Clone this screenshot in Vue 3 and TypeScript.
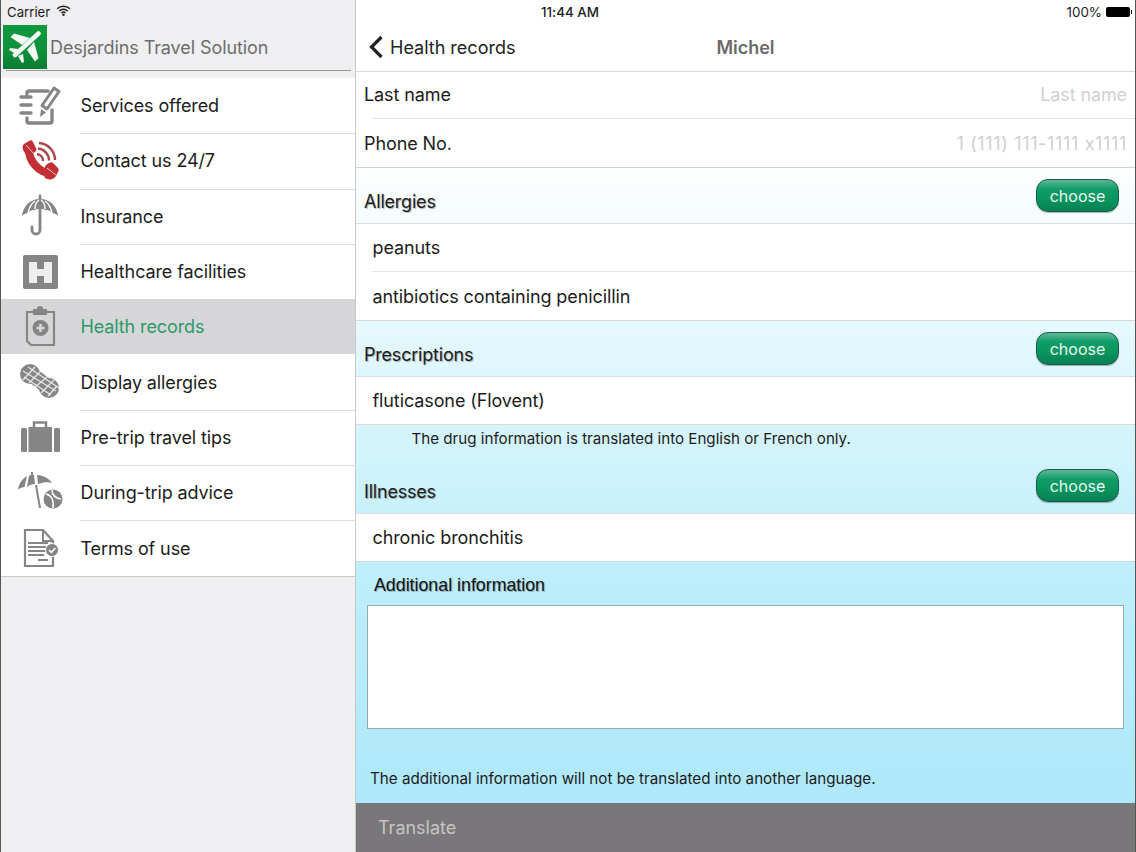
<script setup lang="ts">
interface MenuItem {
  label: string
  icon: string
  active?: boolean
}

const menu: MenuItem[] = [
  { label: 'Services offered', icon: 'services' },
  { label: 'Contact us 24/7', icon: 'phone' },
  { label: 'Insurance', icon: 'umbrella' },
  { label: 'Healthcare facilities', icon: 'hospital' },
  { label: 'Health records', icon: 'records', active: true },
  { label: 'Display allergies', icon: 'peanut' },
  { label: 'Pre-trip travel tips', icon: 'case' },
  { label: 'During-trip advice', icon: 'beach' },
  { label: 'Terms of use', icon: 'terms' }
]
</script>

<template>
  <div class="screen">
    <aside class="side">
      <div class="status-left">
        <span>Carrier</span>
        <svg class="wifi" width="15" height="11" viewBox="0 0 16 12">
          <path d="M1 4.2a10 10 0 0 1 14 0M3.4 6.6a6.6 6.6 0 0 1 9.2 0M5.7 8.8a3.4 3.4 0 0 1 4.6 0" fill="none" stroke="#222" stroke-width="1.6" />
          <circle cx="8" cy="10.6" r="1.3" fill="#222" />
        </svg>
      </div>
      <div class="brand">
        <div class="logo">
          <svg width="32" height="32" viewBox="0 0 32 32">
            <path d="M29.5 2.5 6 24" stroke="#f4f7f4" stroke-width="4.6" stroke-linecap="round" />
            <path d="M21 7 5 2.5 1.5 6 13 14zM25 11l4.5 16-3.5 3.5L18 19zM9 18 1 17l-1 2 7 4zM14 23l1 8-2 1-4-7z" fill="#f4f7f4" />
          </svg>
        </div>
        <span class="brand-name">Desjardins Travel Solution</span>
      </div>
      <ul class="menu">
        <li v-for="item in menu" :key="item.label" class="menu-item" :class="{ active: item.active }">
          <div class="menu-icon">
            <svg width="48" height="48" viewBox="0 0 48 48">
              <g v-if="item.icon === 'services'" fill="none" stroke="#858585" stroke-width="3.4" stroke-linecap="round" stroke-linejoin="round">
                <path d="M11 12v-1a2 2 0 0 1 2-2h19M5 15h10M5 23h10M5 31h10M11 36v3a2 2 0 0 0 2 2h21a2 2 0 0 0 2-2V28" />
                <path d="M38 6l5 3.5L31 27l-5-3.5z" stroke-width="3" />
                <path d="M25 27l5 3.5-6 4.5z" fill="#858585" stroke="none" />
              </g>
              <g v-else-if="item.icon === 'phone'">
                <path d="M13 11C12 24 24 37 36 36" fill="none" stroke="#c22f35" stroke-width="8" />
                <path d="M8 7l5-3c2-1 3-1 4 1l3 6c1 2 0 3-1 4l-5 3c-2 1-4 0-5-2-3-4-3-7-1-9zM30 28l3-2c2-1 3-1 4 0l4 4c2 2 2 3 1 5l-2 4c-2 3-5 4-9 3-2-1-3-2-3-4l1-6c0-2 0-3 1-4z" fill="#c22f35" />
                <path d="M10 8l8 9M31 31l9 7" stroke="#f2c4c4" stroke-width="1" />
                <path d="M21 17a7 7 0 0 1 6 7M22 11.500a12 12 0 0 1 11 12M23 6a17 17 0 0 1 16 17" fill="none" stroke="#a9474b" stroke-width="2.4" />
              </g>
              <g v-else-if="item.icon === 'umbrella'">
                <path d="M24 7C13 7 7 15 6 24c2-2 4-3 6-3 1-2 4-3 6-3 2-1 4-1 6-1s4 0 6 1c2 0 5 1 6 3 2 0 4 1 6 3-1-9-7-17-18-17z" fill="#858585" />
                <path d="M24 4v4M24 18v20a4 4 0 0 1-8 0v-3" fill="none" stroke="#858585" stroke-width="2.8" stroke-linecap="round" />
                <path d="M12 21c1-5 3-9 7-12M36 21c-1-5-3-9-7-12M19 17c0-4 1-7 4-9M29 17c0-4-1-7-4-9" fill="none" stroke="#fff" stroke-width="1.4" />
              </g>
              <g v-else-if="item.icon === 'hospital'">
                <rect x="7" y="7" width="35" height="34" rx="2" fill="#858585" />
                <path d="M13 14h8v7h7v-7h8v21h-8v-7h-7v7h-8z" fill="#eee" />
              </g>
              <g v-else-if="item.icon === 'records'">
                <path d="M11 9h27v33H15l-4-4z" fill="none" stroke="#858585" stroke-width="2.2" />
                <path d="M17 6h4a3 3 0 0 1 6 0h4v6H17z" fill="#858585" />
                <circle cx="24.500" cy="25" r="8" fill="#858585" />
                <path d="M24.500 21v8M20.500 25h8" stroke="#d6d6d8" stroke-width="2.6" />
              </g>
              <g v-else-if="item.icon === 'peanut'">
                <path d="M14 15 33 30" stroke="#858585" stroke-width="15" stroke-linecap="round" />
                <circle cx="14" cy="16" r="10" fill="#858585" />
                <circle cx="33" cy="30" r="10" fill="#858585" />
                <path d="M7 13 40 33M8 19l27 18M12 9l31 21M19 9 7 22M25 13 13 25M31 19 18 30M38 22 25 35M41 28 32 38" fill="none" stroke="#fff" stroke-width="1.3" opacity=".8" />
              </g>
              <g v-else-if="item.icon === 'case'">
                <path d="M18 15V9.500h12V15" fill="none" stroke="#858585" stroke-width="2.6" />
                <rect x="5" y="15" width="6" height="24" rx="1.5" fill="#858585" />
                <rect x="12.500" y="14" width="23.500" height="25" fill="#858585" />
                <rect x="38" y="15" width="6" height="24" rx="1.5" fill="#858585" />
              </g>
              <g v-else-if="item.icon === 'beach'">
                <path d="M2 20.500C3 14 7 9 11 7L8.500 18c-2 0-4 1-6.500 2.500zM13 6.500c2-.5 4-.5 5-.5l1 9c-3 0-6 1-8 3zM21 6c5 0 12 3 15 8-3-1-8-1-14 1z" fill="#858585" />
                <path d="M16 3v4M20 16l4 23" stroke="#858585" stroke-width="2" />
                <circle cx="37" cy="30" r="9.500" fill="#858585" />
                <path d="M30 25c5 1 8 6 7 14M36 21c0 5 3 8 9 9" fill="none" stroke="#fff" stroke-width="1.6" />
              </g>
              <g v-else-if="item.icon === 'terms'">
                <path d="M9 6h18l10 11v25H9z" fill="none" stroke="#858585" stroke-width="2.2" />
                <path d="M27 6v11h10" fill="none" stroke="#858585" stroke-width="2" />
                <path d="M12 19h20M12 23h20M12 27h18M12 31h16M22 36h10" stroke="#858585" stroke-width="2" />
                <circle cx="36" cy="26" r="6.500" fill="#858585" stroke="#fff" stroke-width="1" />
                <path d="M33 26l2.400 2.400 4-4.400" fill="none" stroke="#fff" stroke-width="1.5" />
              </g>
            </svg>
          </div>
          <div class="menu-label">{{ item.label }}</div>
        </li>
      </ul>
    </aside>

    <main class="detail">
      <header class="top">
        <div class="status">
          <span class="time">11:44 AM</span>
          <div class="battery-wrap">
            <span>100%</span>
            <span class="battery"></span>
          </div>
        </div>
        <div class="nav">
          <div class="back">
            <svg width="16" height="24" viewBox="0 0 16 24">
              <path d="M13.500 2 3.500 12l10 10" fill="none" stroke="#222" stroke-width="3.2" />
            </svg>
            <span>Health records</span>
          </div>
          <div class="nav-title">Michel</div>
        </div>
      </header>

      <div class="content">
        <section class="fields">
          <div class="field first">
            <span>Last name</span>
            <span class="placeholder">Last name</span>
          </div>
          <div class="field">
            <span>Phone No.</span>
            <span class="placeholder">1 (111) 111-1111 x1111</span>
          </div>
        </section>

        <div class="sec-head">
          <span class="sec-title">Allergies</span>
          <button class="choose">choose</button>
        </div>
        <div class="rows">
          <div class="row">peanuts</div>
          <div class="row">antibiotics containing penicillin</div>
        </div>

        <div class="sec-head">
          <span class="sec-title">Prescriptions</span>
          <button class="choose">choose</button>
        </div>
        <div class="rows">
          <div class="row">fluticasone (Flovent)</div>
        </div>
        <p class="drug-note">The drug information is translated into English or French only.</p>

        <div class="sec-head">
          <span class="sec-title">Illnesses</span>
          <button class="choose">choose</button>
        </div>
        <div class="rows">
          <div class="row">chronic bronchitis</div>
        </div>

        <h3 class="add-title">Additional information</h3>
        <div class="textarea"></div>
        <p class="add-note">The additional information will not be translated into another language.</p>
      </div>

      <div class="translate">Translate</div>
    </main>
  </div>
</template>

<style>
html, body {
  margin: 0;
  background: #fff;
}
</style>

<style scoped>
.screen {
  width: 1136px;
  height: 852px;
  display: flex;
  overflow: hidden;
  font-family: Inter, "Liberation Sans", sans-serif;
  font-feature-settings: "calt" 0;
  color: #1c1c1c;
  border-left: 1px solid #555;
  border-right: 1px solid #555;
  box-sizing: border-box;
}

/* left menu */
.side {
  width: 354px;
  flex-shrink: 0;
  background: #efeff1;
  border-right: 1px solid #c8c8c8;
  display: flex;
  flex-direction: column;
}

.status-left {
  height: 25px;
  padding: 0 0 1px 6px;
  box-sizing: border-box;
  display: flex;
  align-items: center;
  gap: 6px;
  font-size: 13.2px;
}

.wifi {
  margin-top: -3px;
}

.brand {
  height: 53px;
  display: flex;
  align-items: flex-start;
  position: relative;
}

.brand::after {
  content: "";
  position: absolute;
  left: 5px;
  right: 4px;
  bottom: 7px;
  height: 1px;
  background: #9a9a9a;
}

.logo {
  width: 44px;
  height: 44px;
  margin-left: 2px;
  background: linear-gradient(#0e9a40 0%, #0c9139 60%, #0b7a33 100%);
  display: flex;
  align-items: center;
  justify-content: center;
}

.brand-name {
  margin-left: 3px;
  margin-top: 12px;
  font-size: 18px;
  letter-spacing: -0.08px;
  color: #6d6d6d;
}

.menu {
  list-style: none;
  margin: 0;
  padding: 0;
  background: #fff;
  border-bottom: 1px solid #c8c8c8;
}

.menu-item {
  height: 55.3px;
  display: flex;
  align-items: center;
  box-sizing: border-box;
  position: relative;
}

.menu-item + .menu-item::before {
  content: "";
  position: absolute;
  left: 79px;
  right: 0;
  top: 0;
  height: 1px;
  background: #dcdcdc;
}

.menu-item.active {
  background: #d6d6d8;
}

.menu-item.active::before,
.menu-item.active + .menu-item::before {
  display: none;
}

.menu-icon {
  width: 48px;
  height: 48px;
  margin-left: 15px;
  flex-shrink: 0;
}

.menu-label {
  margin-left: 16.5px;
  font-size: 18px;
  letter-spacing: -0.11px;
}

.active .menu-label {
  color: #2a9a68;
}

/* right side */
.detail {
  flex: 1;
  min-width: 0;
  display: flex;
  flex-direction: column;
  background: #fff;
}

.top {
  height: 72px;
  box-sizing: border-box;
  border-bottom: 1px solid #d8d8d8;
  flex-shrink: 0;
}

.status {
  height: 24px;
  padding-left: 185px;
  display: flex;
  align-items: center;
  font-size: 13.4px;
  position: relative;
}

.time {
  font-weight: 500;
}

.battery-wrap {
  position: absolute;
  right: 5px;
  top: 0;
  height: 24px;
  display: flex;
  align-items: center;
  gap: 4px;
}

.battery {
  width: 24px;
  height: 10px;
  background: #000;
  border-radius: 2px;
  position: relative;
}

.battery::after {
  content: "";
  position: absolute;
  right: -2px;
  top: 3px;
  width: 1.5px;
  height: 4px;
  background: #000;
}

.nav {
  height: 47px;
  position: relative;
  display: flex;
  align-items: center;
  justify-content: center;
}

.back {
  position: absolute;
  left: 12px;
  top: 11px;
  display: flex;
  align-items: center;
  gap: 6px;
  font-size: 18px;
  color: #222;
}

.nav-title {
  font-size: 18px;
  font-weight: 600;
  color: #6a6a6a;
}

.content {
  flex: 1;
  min-height: 0;
  display: flex;
  flex-direction: column;
  background: linear-gradient(#ffffff 12%, #bdeefb 70%, #aee8fa 100%);
}

.fields {
  background: #fff;
  border-bottom: 1px solid #d2d2d2;
}

.field {
  height: 49px;
  padding: 1px 8px 0;
  display: flex;
  align-items: center;
  justify-content: space-between;
  font-size: 18px;
  letter-spacing: -0.1px;
  box-sizing: border-box;
  position: relative;
}

.field.first {
  height: 46px;
  padding: 0 8px 1px;
}

.field:not(.first)::before {
  content: "";
  position: absolute;
  left: 16px;
  right: 0;
  top: 0;
  height: 1px;
  background: #e4e4e4;
}

.placeholder {
  color: #cfcfd3;
}

.field:not(.first) .placeholder {
  letter-spacing: 0.65px;
}

.sec-head {
  height: 55px;
  display: flex;
  justify-content: space-between;
  align-items: flex-start;
  padding: 11px 16px 0 8px;
  box-sizing: border-box;
}

.sec-title {
  margin-top: 11.5px;
  font-size: 18px;
  letter-spacing: -0.2px;
  text-shadow: 1px 1px 1px rgba(0, 0, 0, 0.3);
}

.choose {
  width: 83px;
  height: 33px;
  padding: 0;
  border: 1px solid #175c46;
  border-radius: 12px;
  background: linear-gradient(#5db897 0%, #109c66 30%, #0a9560 60%, #078053 100%);
  box-shadow: 0 1px 1px rgba(0, 0, 0, 0.3);
  color: #e6f8ef;
  font-family: inherit;
  font-size: 16px;
}

.rows {
  background: #fff;
  border-top: 1px solid #dcdcdc;
  border-bottom: 1px solid #d8d8d8;
}

.row {
  height: 47px;
  display: flex;
  align-items: center;
  padding-left: 16.5px;
  font-size: 18px;
  letter-spacing: -0.1px;
  box-sizing: border-box;
  position: relative;
}

.row + .row {
  height: 49px;
  padding-top: 1px;
}

.row + .row::before {
  content: "";
  position: absolute;
  left: 16px;
  right: 0;
  top: 0;
  height: 1px;
  background: #e4e4e4;
}

.drug-note {
  margin: 0;
  height: 33px;
  padding: 5px 0 0 55.5px;
  box-sizing: border-box;
  font-size: 15.15px;
  line-height: 18px;
}

.add-title {
  margin: 12px 0 0 18px;
  font-family: "Liberation Sans", Arial, sans-serif;
  font-size: 17.8px;
  font-weight: 400;
  line-height: 22px;
  color: #111;
  text-shadow: 1px 1px 1px rgba(0, 0, 0, 0.3);
}

.textarea {
  height: 124px;
  margin: 9px 11px 0;
  background: #fff;
  border: 1px solid #97a9b0;
  box-sizing: border-box;
}

.add-note {
  margin: 40px 0 0 14px;
  font-size: 15.2px;
  line-height: 20px;
}

.translate {
  height: 49px;
  flex-shrink: 0;
  background: #797779;
  color: #c6c6c6;
  font-size: 18px;
  display: flex;
  align-items: center;
  padding: 0 0 1px 22px;
  box-sizing: border-box;
}
</style>
